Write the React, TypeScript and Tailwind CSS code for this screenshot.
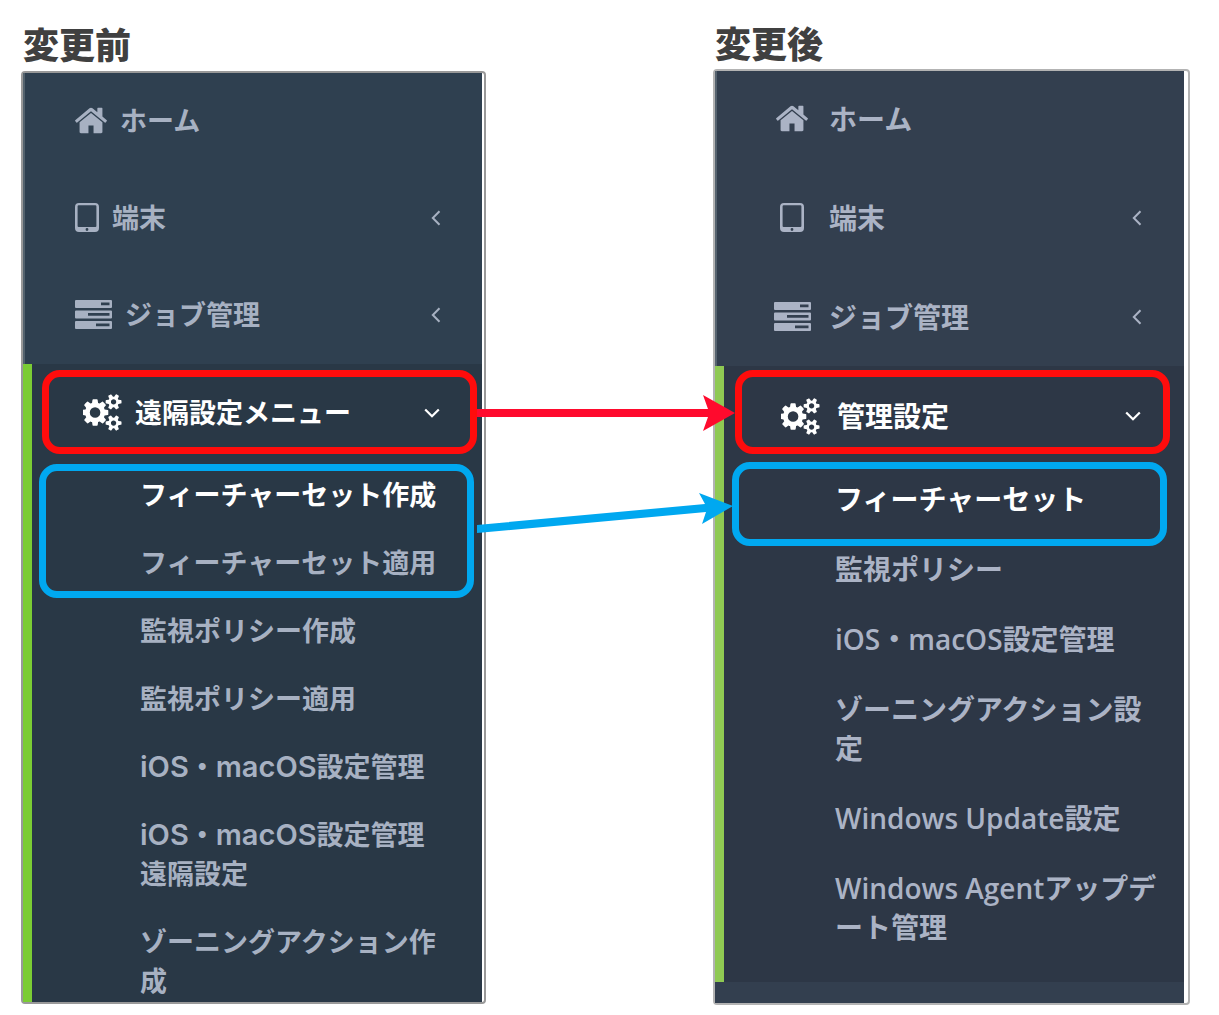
import type { ReactNode } from "react";
import clsx from "clsx";

const GEAR_SMALL =
  "v140q0 16-149 31-12 27-30 52 51 113 51 138 0 4-4 7-122 71-124 71-8 0-46-47t-52-68q-20 2-30 2t-30-2q-14 21-52 68t-46 47q-2 0-124-71-4-3-4-7 0-25 51-138-18-25-30-52-149-15-149-31v-140q0-16 149-31 13-29 30-52-51-113-51-138 0-4 4-7 4-2 35-20t59-34 30-16q8 0 46 46.5t52 67.5q20-2 30-2t30 2q51-71 92-112l6-2q4 0 124 70 4 3 4 7 0 25-51 138 17 23 30 52 149 15 149 31z";

const HomeIcon = () => (
  <svg viewBox="89 250 1614 1290" className="h-[27px] w-8" fill="currentColor" aria-hidden="true">
    <path d="M1472 992v480q0 26-19 45t-45 19h-384v-384h-256v384h-384q-26 0-45-19t-19-45v-480q0-1 .5-3t.5-3l575-474 575 474q1 2 1 6zm223-69l-62 74q-8 9-21 11h-3q-13 0-21-7l-692-577-692 577q-12 8-24 7-13-2-21-11l-62-74q-8-10-7-23.5t11-21.5l719-599q32-26 76-26t76 26l244 204v-195q0-14 9-23t23-9h192q14 0 23 9t9 23v408l219 182q10 8 11 21.5t-7 23.5z" />
  </svg>
);

const TabletIcon = () => (
  <svg viewBox="0 0 24 29" className="h-[29px] w-6" fill="currentColor" aria-hidden="true">
    <path
      fillRule="evenodd"
      d="M4 0h16a4 4 0 0 1 4 4v21a4 4 0 0 1-4 4H4a4 4 0 0 1-4-4V4a4 4 0 0 1 4-4zM3.600 2.200a1 1 0 0 0-1 1V23a1 1 0 0 0 1 1h16.800a1 1 0 0 0 1-1V3.200a1 1 0 0 0-1-1zM12 25.100a1.400 1.400 0 1 0 0 2.800a1.400 1.400 0 0 0 0-2.800z"
    />
  </svg>
);

const TasksIcon = () => (
  <svg viewBox="0 0 37 29" className="h-[29px] w-[37px]" fill="currentColor" aria-hidden="true">
    <path
      fillRule="evenodd"
      d="M1 0h35a1 1 0 0 1 1 1v6a1 1 0 0 1-1 1H1a1 1 0 0 1-1-1V1a1 1 0 0 1 1-1zM26 2.600v2.600h8.500V2.600zM1 10.500h35a1 1 0 0 1 1 1v6a1 1 0 0 1-1 1H1a1 1 0 0 1-1-1v-6a1 1 0 0 1 1-1zM13 13.100v2.600h21.500v-2.600zM1 21h35a1 1 0 0 1 1 1v6a1 1 0 0 1-1 1H1a1 1 0 0 1-1-1v-6a1 1 0 0 1 1-1zM21 23.600v2.600h13.500v-2.600z"
    />
  </svg>
);

const CogsIcon = () => (
  <svg viewBox="0 0 1920 1792" className="h-[37px] w-10" fill="currentColor" aria-hidden="true">
    <path
      d={
        "M832 896q0-106-75-181t-181-75-181 75-75 181 75 181 181 75 181-75 75-181zm768 512q0-52-38-90t-90-38-90 38-38 90q0 53 37.5 90.5t90.5 37.5 90.5-37.5 37.5-90.5zm0-1024q0-52-38-90t-90-38-90 38-38 90q0 53 37.5 90.5t90.5 37.5 90.5-37.5 37.5-90.5zm-384 421v185q0 10-7 19.5t-16 10.5l-155 24q-11 35-32 76 34 48 90 115 7 11 7 20 0 12-7 19-23 30-82.5 89.5t-78.5 59.5q-11 0-21-7l-115-90q-37 19-77 31-11 108-23 155-7 24-30 24h-186q-11 0-20-7.5t-10-17.5l-23-153q-34-10-75-31l-118 89q-7 7-20 7-11 0-21-8-144-133-144-160 0-9 7-19 10-14 41-53t47-61q-23-44-35-82l-152-24q-10-1-17-9.5t-7-19.5v-185q0-10 7-19.5t16-10.5l155-24q11-35 32-76-34-48-90-115-7-11-7-20 0-12 7-20 22-30 82-89t79-59q11 0 21 7l115 90q34-18 77-32 11-108 23-154 7-24 30-24h186q11 0 20 7.5t10 17.5l23 153q34 10 75 31l118-89q8-7 20-7 11 0 21 8 144 133 144 160 0 8-7 19-12 16-42 54t-45 60q23 48 34 82l152 23q10 2 17 10.5t7 19.5zm640 533" +
        GEAR_SMALL +
        "m0-1024" +
        GEAR_SMALL
      }
    />
  </svg>
);

const AngleLeft = () => (
  <svg viewBox="0 0 10 16" className="h-4 w-2.5" fill="none" stroke="currentColor" strokeWidth="2" aria-hidden="true">
    <path d="M8.500 1.200L1.800 8l6.700 6.800" />
  </svg>
);

const AngleDown = () => (
  <svg viewBox="0 0 16 10" className="h-2.5 w-4" fill="none" stroke="currentColor" strokeWidth="2.200" aria-hidden="true">
    <path d="M1.200 1.500L8 8.200l6.800-6.700" />
  </svg>
);

type RowProps = { icon: ReactNode; label: string; angle?: ReactNode; className: string };

const Row = ({ icon, label, angle, className }: RowProps) => (
  <button type="button" className={clsx("flex w-full items-center text-left", className)}>
    {icon}
    <span className="flex-1 whitespace-nowrap">{label}</span>
    {angle}
  </button>
);

const IconBox = ({ children }: { children: ReactNode }) => (
  <span className="flex w-10 justify-center">{children}</span>
);

const SubLink = ({ children, active }: { children: ReactNode; active?: boolean }) => (
  <a href="#" className={clsx("block whitespace-nowrap", active && "text-white")}>
    {children}
  </a>
);

const Latin = ({ children }: { children: string }) => (
  <span className="font-[Inter,sans-serif] text-[29px] leading-none font-semibold">{children}</span>
);

const Before = () => (
  <section>
    <h2 className="flex h-[71px] items-center pt-3.5 pl-0.5 text-4xl font-black text-[#404040]">変更前</h2>
    <div className="rounded-sm border-2 border-[#999999] pr-0.5">
      <nav className="bg-[#2f4050] text-[27px] font-bold text-[#a7b1c2]">
        <div className="border-l-2 border-[#53626d]">
          <Row className="h-[97px] gap-[13px] pr-[41px] pb-0.5 pl-[50px]" icon={<HomeIcon />} label="ホーム" />
          <Row className="h-[97px] gap-[13px] pr-[41px] pb-0.5 pl-[50px]" icon={<TabletIcon />} label="端末" angle={<AngleLeft />} />
          <Row className="h-[97px] gap-[13px] pr-[41px] pb-0.5 pl-[50px]" icon={<TasksIcon />} label="ジョブ管理" angle={<AngleLeft />} />
        </div>
        <div className="border-l-9 border-[#7bcc34] bg-[#293846] pb-[3px]">
          <div className="relative text-white">
            <Row className="h-[97px] gap-3 pr-[42px] pl-[51px]" icon={<CogsIcon />} label="遠隔設定メニュー" angle={<AngleDown />} />
            <span className="pointer-events-none absolute top-1.5 right-[5px] left-2.5 h-21 rounded-[18px] border-7 border-[#ff0c0c]" />
          </div>
          <div className="flex flex-col gap-[29px] pt-[13px] pl-[108px] leading-[39px]">
            <div className="relative flex flex-col gap-[29px]">
              <SubLink active>フィーチャーセット作成</SubLink>
              <SubLink>フィーチャーセット適用</SubLink>
              <span className="pointer-events-none absolute -top-2.5 right-2 -left-[101px] h-[134px] rounded-[18px] border-7 border-[#00a8f0]" />
            </div>
            <SubLink>監視ポリシー作成</SubLink>
            <SubLink>監視ポリシー適用</SubLink>
            <SubLink>
              <Latin>iOS</Latin>・<Latin>macOS</Latin>設定管理
            </SubLink>
            <SubLink>
              <Latin>iOS</Latin>・<Latin>macOS</Latin>設定管理
              <br />
              遠隔設定
            </SubLink>
            <SubLink>
              ゾーニングアクション作
              <br />成
            </SubLink>
          </div>
        </div>
      </nav>
    </div>
  </section>
);

const After = () => (
  <section>
    <h2 className="flex h-[69px] items-center pt-3.5 pl-0.5 text-4xl font-black text-[#404040]">変更後</h2>
    <div className="rounded-sm border-2 border-[#b3b3b3] pr-1">
      <nav className="bg-[#333f4f] pb-[21px] font-['Open_Sans','Noto_Sans_CJK_JP',sans-serif] text-[28px] font-semibold text-[#abb3c5]">
        <div className="border-l-2 border-[#56636f]">
          <Row className="h-[97px] gap-[17px] pr-[42px] pb-0.5 pl-[55px]" icon={<IconBox><HomeIcon /></IconBox>} label="ホーム" />
          <Row className="h-[99px] gap-[17px] pr-[42px] pl-[55px]" icon={<IconBox><TabletIcon /></IconBox>} label="端末" angle={<AngleLeft />} />
          <Row className="h-[99px] gap-[17px] pr-[42px] pl-[55px]" icon={<IconBox><TasksIcon /></IconBox>} label="ジョブ管理" angle={<AngleLeft />} />
        </div>
        <div className="border-l-9 border-[#8fc953] bg-[#2d3746]">
          <div className="relative text-white">
            <Row className="h-[100px] gap-4 pr-[43px] pl-[57px]" icon={<IconBox><CogsIcon /></IconBox>} label="管理設定" angle={<AngleDown />} />
            <span className="pointer-events-none absolute top-1 right-3.5 left-[11px] h-21 rounded-[18px] border-7 border-[#ff0c0c]" />
          </div>
          <div className="flex flex-col gap-[31px] pt-3.5 pb-[35px] pl-[111px] leading-[39px]">
            <div className="relative">
              <SubLink active>フィーチャーセット</SubLink>
              <span className="pointer-events-none absolute -top-[18px] right-[17px] -left-[103px] h-21 rounded-[18px] border-7 border-[#00a8f0]" />
            </div>
            <SubLink>監視ポリシー</SubLink>
            <SubLink>iOS・macOS設定管理</SubLink>
            <SubLink>
              ゾーニングアクション設
              <br />定
            </SubLink>
            <SubLink>Windows Update設定</SubLink>
            <SubLink>
              Windows Agentアップデ
              <br />
              ート管理
            </SubLink>
          </div>
        </div>
      </nav>
    </div>
  </section>
);

export default function App() {
  return (
    <main className="grid min-h-screen grid-cols-[465fr_227fr_477fr] items-start bg-white pr-[29px] pl-[21px] font-['Noto_Sans_CJK_JP',sans-serif]">
      <Before />
      {/* Arrows between the panels */}
      <div className="relative z-10">
        <svg viewBox="0 0 260 150" className="absolute top-[390px] -left-[9px] h-[150px] w-[260px]" aria-hidden="true">
          <path d="M0 19H231L226 5L258 23L226 41L231 27H0z" fill="#ff0a2d" />
          <path d="M-1 135L228 114L222 103L256 116L225 134L229 122L0 143z" fill="#00a8f0" />
        </svg>
      </div>
      <After />
    </main>
  );
}
